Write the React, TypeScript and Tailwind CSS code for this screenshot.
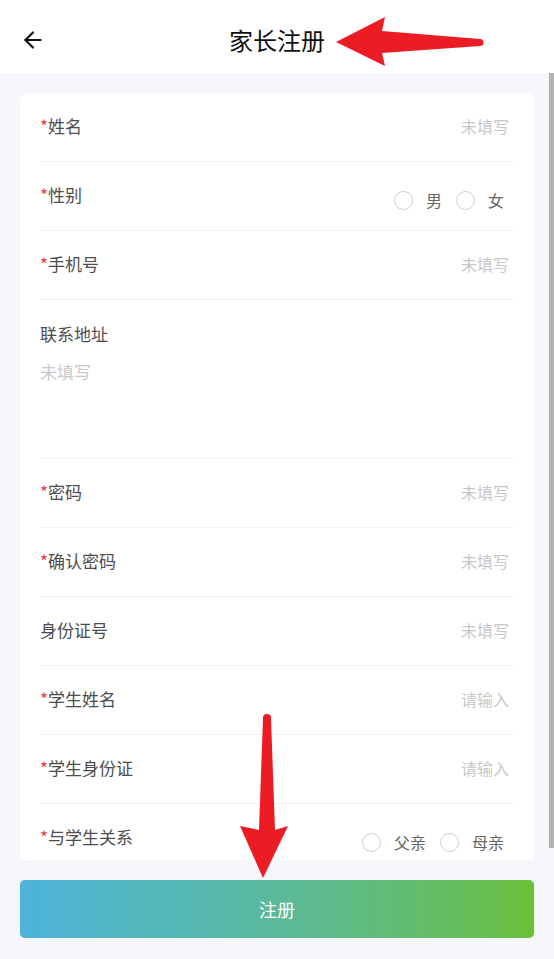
import { ArrowLeft } from 'lucide-react';

type Field = {
  label: string;
  required?: boolean;
  placeholder?: string;
  options?: string[];
  tall?: boolean;
};

const fields: Field[] = [
  { label: '姓名', required: true, placeholder: '未填写' },
  { label: '性别', required: true, options: ['男', '女'] },
  { label: '手机号', required: true, placeholder: '未填写' },
  { label: '联系地址', placeholder: '未填写', tall: true },
  { label: '密码', required: true, placeholder: '未填写' },
  { label: '确认密码', required: true, placeholder: '未填写' },
  { label: '身份证号', placeholder: '未填写' },
  { label: '学生姓名', required: true, placeholder: '请输入' },
  { label: '学生身份证', required: true, placeholder: '请输入' },
  { label: '与学生关系', required: true, options: ['父亲', '母亲'] },
];

function Label({ f }: { f: Field }) {
  return (
    <span className="text-[17px] leading-5 text-[#4d4d4d]">
      {f.required && <span className="text-[#ee3a3a]">*</span>}
      {f.label}
    </span>
  );
}

function Row({ f }: { f: Field }) {
  if (f.tall) {
    return (
      <div className="h-[159px] border-b border-[#f0f0f0] pt-[22px]">
        <Label f={f} />
        <div className="mt-[16px] text-[17px] leading-5 text-[#c8c8c8]">{f.placeholder}</div>
      </div>
    );
  }
  return (
    <div className="h-[69px] border-b border-[#f0f0f0] flex items-center justify-between pb-[2px]">
      <Label f={f} />
      {f.options ? (
        <div className="flex items-center pt-[10px] pr-[10px]">
          {f.options.map((o, i) => (
            <label key={o} className={`flex items-center gap-[13px] ${i > 0 ? 'ml-[14px]' : ''}`}>
              <span className="w-[19px] h-[19px] rounded-full border border-[#d0d0d0] bg-white" />
              <span className="text-[16px] leading-5 text-[#666]">{o}</span>
            </label>
          ))}
        </div>
      ) : (
        <span className="pr-[5px] text-[16px] leading-5 text-[#c8c8c8]">{f.placeholder}</span>
      )}
    </div>
  );
}

export default function App() {
  return (
    <div
      className="relative w-full h-[959px] bg-[#f5f7fb] overflow-hidden flex flex-col"
      style={{ fontFamily: '"Noto Sans CJK SC", "Noto Sans", sans-serif' }}
    >
      {/* Header */}
      <header className="h-[73px] bg-white flex items-center pt-[7px] px-[20px] shrink-0">
        <ArrowLeft size={26} strokeWidth={2} className="text-[#111]" />
        <h1 className="flex-1 text-center text-[24px] leading-7 text-[#111]">家长注册</h1>
        <div className="w-[26px]" />
      </header>

      {/* Form */}
      <div className="h-[787px] overflow-hidden px-[20px] pt-[20px] shrink-0">
        <div className="bg-white rounded-[8px] px-[20px]">
          {fields.map((f) => (
            <Row key={f.label} f={f} />
          ))}
        </div>
      </div>

      {/* Submit */}
      <div className="flex-1 px-[20px] pt-[20px]">
        <button className="w-full h-[58px] rounded-[5px] bg-gradient-to-r from-[#4db3da] via-[#5ab99a] to-[#6bbf35] text-white text-[18px]">
          注册
        </button>
      </div>

      {/* scrollbar thumb */}
      <div className="absolute right-0 top-[73px] w-[5px] h-[775px] bg-[#b3b3b3]" />

      {/* annotation arrows */}
      <svg className="absolute inset-0 pointer-events-none" width="554" height="959" viewBox="0 0 554 959">
        <path
          d="M336 42 L385 17 L382 31 L480 39 A3.5 3.5 0 0 1 480 46 L382 53 L385 66 Z"
          fill="#ec1c24"
        />
        <path
          d="M263 718 A4 4 0 0 1 271 718 L275 830 L288 826 L263 878 L240 826 L259 830 Z"
          fill="#ec1c24"
        />
      </svg>
    </div>
  );
}
